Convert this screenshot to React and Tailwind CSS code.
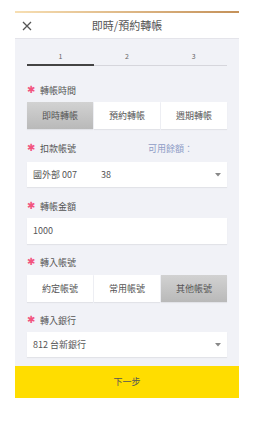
import React from 'react';

const font = { fontFamily: '"Noto Sans CJK TC", "Noto Sans", sans-serif' };

const Label = ({ text, right, className = '' }) => (
  <div className={`flex items-center h-[14px] ${className}`}>
    <span
      className="text-[#f2557f] text-[10px] leading-none w-[13px]"
      style={{ fontFamily: '"DejaVu Sans", sans-serif' }}
    >
      ✱
    </span>
    <span className="text-[9px] text-[#555] leading-none">{text}</span>
    {right && <span className="ml-auto mr-[34px] text-[9px] text-[#8e9cc6] leading-none">{right}</span>}
  </div>
);

const Segments = ({ items, active, className = '' }) => (
  <div className={`grid grid-cols-3 gap-px h-[27px] ${className}`}>
    {items.map((it, i) => (
      <div
        key={it}
        className={`flex items-center justify-center text-[9px] text-[#555] ${
          i === active
            ? 'bg-gradient-to-b from-[#d2d2d2] to-[#b9b9b9]'
            : 'bg-white'
        } shadow-[0_1px_1px_rgba(0,0,0,0.06)]`}
      >
        {it}
      </div>
    ))}
  </div>
);

const Caret = () => (
  <svg width="6" height="4" viewBox="0 0 6 4" className="ml-auto mr-[6px]">
    <path d="M0 0 L6 0 L3 3.5 Z" fill="#888" />
  </svg>
);

const Field = ({ children, h = 'h-[25px]', className = '' }) => (
  <div className={`flex items-center bg-white ${h} pl-[6px] text-[9px] text-[#555] shadow-[0_1px_1px_rgba(0,0,0,0.06)] ${className}`}>
    {children}
  </div>
);

export default function App() {
  return (
    <div className="w-[266px] h-[426px] bg-white" style={font}>
      <div className="ml-[15px] w-[224px]">
        <div className="h-[11px]" />
        <div className="h-[2px] bg-gradient-to-r from-[#f7dfb3] to-[#c49159]" />
        <div className="h-[26px] flex items-center relative border-b border-[#e4e4ea]">
          <svg width="10" height="10" viewBox="0 0 10 10" className="ml-[7px]">
            <path d="M1 1 L9 9 M9 1 L1 9" stroke="#555" strokeWidth="1.3" />
          </svg>
          <div className="absolute inset-0 flex items-center justify-center text-[11px] text-[#555]">
            即時/預約轉帳
          </div>
        </div>
        <div className="bg-[#f1f2f7] px-[12px] pt-[12px] pb-[9px]">
          <div className="grid grid-cols-3 h-[10px] text-[7px] text-[#666] leading-[10px] text-center">
            <span>1</span>
            <span>2</span>
            <span>3</span>
          </div>
          <div className="mt-[3px] h-[2px] flex items-center">
            <div className="w-[67px] h-[2px] bg-[#444]" />
            <div className="flex-1 h-px bg-[#d6d6dc]" />
          </div>

          <Label text="轉帳時間" className="mt-[17px]" />
          <Segments items={['即時轉帳', '預約轉帳', '週期轉帳']} active={0} className="mt-[5px]" />

          <Label text="扣款帳號" right="可用餘額：" className="mt-[12px]" />
          <Field className="mt-[7px]">
            <span>國外部 007</span>
            <span className="ml-[24px]">38</span>
            <Caret />
          </Field>

          <Label text="轉帳金額" className="mt-[12px]" />
          <Field h="h-[26px]" className="mt-[5px]">
            <span>1000</span>
          </Field>

          <Label text="轉入帳號" className="mt-[11px]" />
          <Segments items={['約定帳號', '常用帳號', '其他帳號']} active={2} className="mt-[6px]" />

          <Label text="轉入銀行" className="mt-[11px]" />
          <Field className="mt-[5px]">
            <span>812 台新銀行</span>
            <Caret />
          </Field>
        </div>
        <div className="h-[32px] bg-[#ffdd00] flex items-center justify-center text-[9px] text-[#555]">
          下一步
        </div>
      </div>
    </div>
  );
}
